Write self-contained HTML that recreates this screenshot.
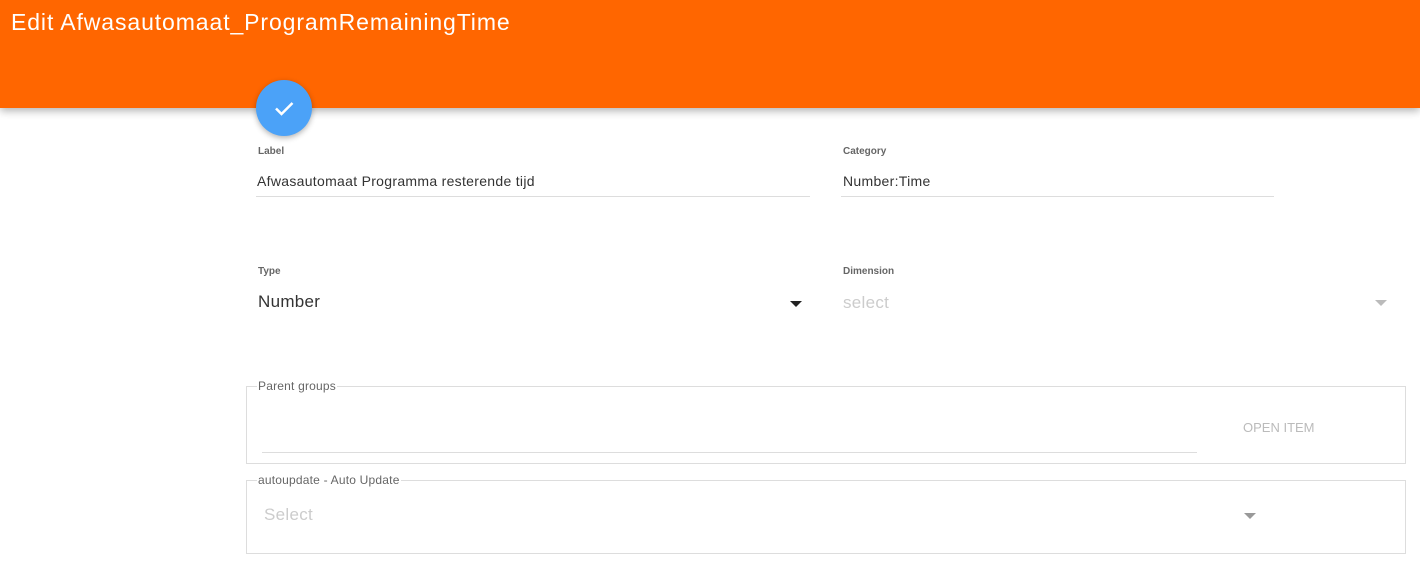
<!DOCTYPE html>
<html><head><style>
body{margin:0;width:1420px;height:569px;background:#fff;font-family:"Liberation Sans",sans-serif;position:relative;overflow:hidden}
.hdr{position:absolute;left:0;top:0;width:1420px;height:108px;background:#ff6600;box-shadow:0 3px 8px rgba(0,0,0,.3)}
.hdr span{position:absolute;left:11px;top:9px;color:#fff;font-size:23px;letter-spacing:0.9px}
.fab{position:absolute;left:256px;top:80px;width:56px;height:56px;border-radius:50%;background:#4ba2f8;box-shadow:0 2px 6px rgba(0,0,0,.3)}
.lbl{position:absolute;font-size:10px;font-weight:bold;color:#666}
.val{position:absolute;font-size:14px;color:#333;letter-spacing:0.3px}
.line{position:absolute;height:1px;background:#ddd}
.box{position:absolute;border:1px solid #ddd}
.leg{position:absolute;background:#fff;font-size:12px;color:#666;padding:0 1px;letter-spacing:0.2px}
.tri{position:absolute;width:0;height:0;border-left:6px solid transparent;border-right:6px solid transparent;border-top:6px solid #222}
</style></head><body>
<div class="hdr"><span>Edit Afwasautomaat_ProgramRemainingTime</span></div>
<div class="fab"><svg width="56" height="56"><path d="M20 28.5l5.5 5.5 11-11" stroke="#fff" stroke-width="2.5" fill="none"/></svg></div>
<div class="lbl" style="left:258px;top:146px">Label</div>
<div class="val" style="left:257px;top:173px">Afwasautomaat Programma resterende tijd</div>
<div class="line" style="left:256px;top:196px;width:554px"></div>
<div class="lbl" style="left:843px;top:146px">Category</div>
<div class="val" style="left:843px;top:173px">Number:Time</div>
<div class="line" style="left:841px;top:196px;width:433px"></div>
<div class="lbl" style="left:258px;top:266px">Type</div>
<div class="val" style="left:258px;top:292px;font-size:17px">Number</div>
<div class="tri" style="left:790px;top:301px"></div>
<div class="lbl" style="left:843px;top:266px">Dimension</div>
<div class="val" style="left:843px;top:293px;font-size:17px;color:#ccc">select</div>
<div class="tri" style="left:1375px;top:300px;border-top-color:#bbb"></div>
<div class="box" style="left:246px;top:386px;width:1158px;height:76px"></div>
<div class="leg" style="left:257px;top:379px">Parent groups</div>
<div class="line" style="left:262px;top:452px;width:935px"></div>
<div style="position:absolute;left:1243px;top:420px;font-size:13px;color:#bbb">OPEN ITEM</div>
<div class="box" style="left:246px;top:480px;width:1158px;height:72px"></div>
<div class="leg" style="left:257px;top:473px">autoupdate - Auto Update</div>
<div class="val" style="left:264px;top:505px;font-size:17px;color:#ccc">Select</div>
<div class="tri" style="left:1244px;top:513px;border-top-color:#999"></div>
</body></html>
